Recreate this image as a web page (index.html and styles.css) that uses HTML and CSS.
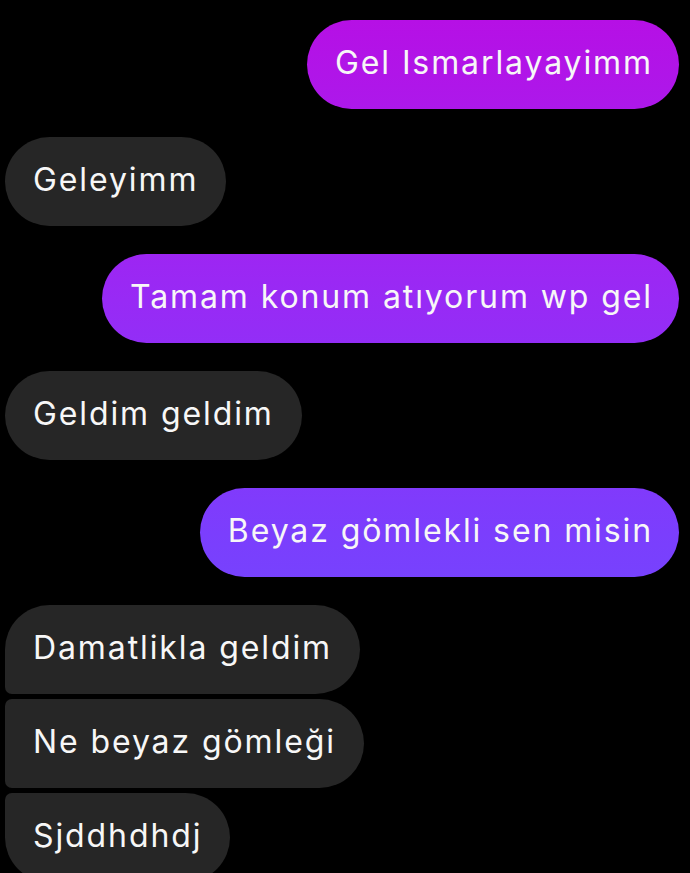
FILE: index.html
```html
<!DOCTYPE html>
<html lang="tr">
<head>
  <meta charset="UTF-8">
  <meta name="viewport" content="width=device-width, initial-scale=1.0">
  <title>Sohbet</title>
  <link rel="stylesheet" href="styles.css">
</head>
<body>
  <div class="thread">
    <div class="row sent">
      <div class="bubble">Gel Ismarlayayimm</div>
    </div>
    <div class="row received">
      <div class="bubble">Geleyimm</div>
    </div>
    <div class="row sent">
      <div class="bubble">Tamam konum atıyorum wp gel</div>
    </div>
    <div class="row received">
      <div class="bubble">Geldim geldim</div>
    </div>
    <div class="row sent">
      <div class="bubble">Beyaz gömlekli sen misin</div>
    </div>
    <div class="group received">
      <div class="bubble first">Damatlikla geldim</div>
      <div class="bubble middle">Ne beyaz gömleği</div>
      <div class="bubble last">Sjddhdhdj</div>
    </div>
  </div>
</body>
</html>
```

FILE: styles.css
```css
html, body {
  margin: 0;
  padding: 0;
  background-color: #000;
  height: 100%;
  overflow: hidden;
}

body {
  font-family: Inter, "Noto Sans", sans-serif;
  color: #f7f7f7;
}

.thread {
  display: flex;
  flex-direction: column;
  gap: 28px;
  padding: 20px 11px 0 5px;
}

.row {
  display: flex;
}

.row.sent {
  justify-content: flex-end;
}

.row.received {
  justify-content: flex-start;
}

.group {
  display: flex;
  flex-direction: column;
  align-items: flex-start;
  gap: 5px;
}

.bubble {
  font-size: 32px;
  line-height: 38px;
  letter-spacing: 1.9px;
  padding: 24px 26px 27px 28px;
  border-radius: 45px;
  white-space: nowrap;
}

.received .bubble {
  background-color: #262626;
}

.received .bubble {
  padding-right: 28px;
}

.sent .bubble {
  background-image: linear-gradient(180deg, #b80ee4 0px, #982af5 300px, #7b3efd 533px, #5d58ff 873px);
  background-attachment: fixed;
}

.group .first {
  border-bottom-left-radius: 7px;
}

.group .middle {
  border-top-left-radius: 7px;
  border-bottom-left-radius: 7px;
}

.group .last {
  border-top-left-radius: 7px;
}
```
